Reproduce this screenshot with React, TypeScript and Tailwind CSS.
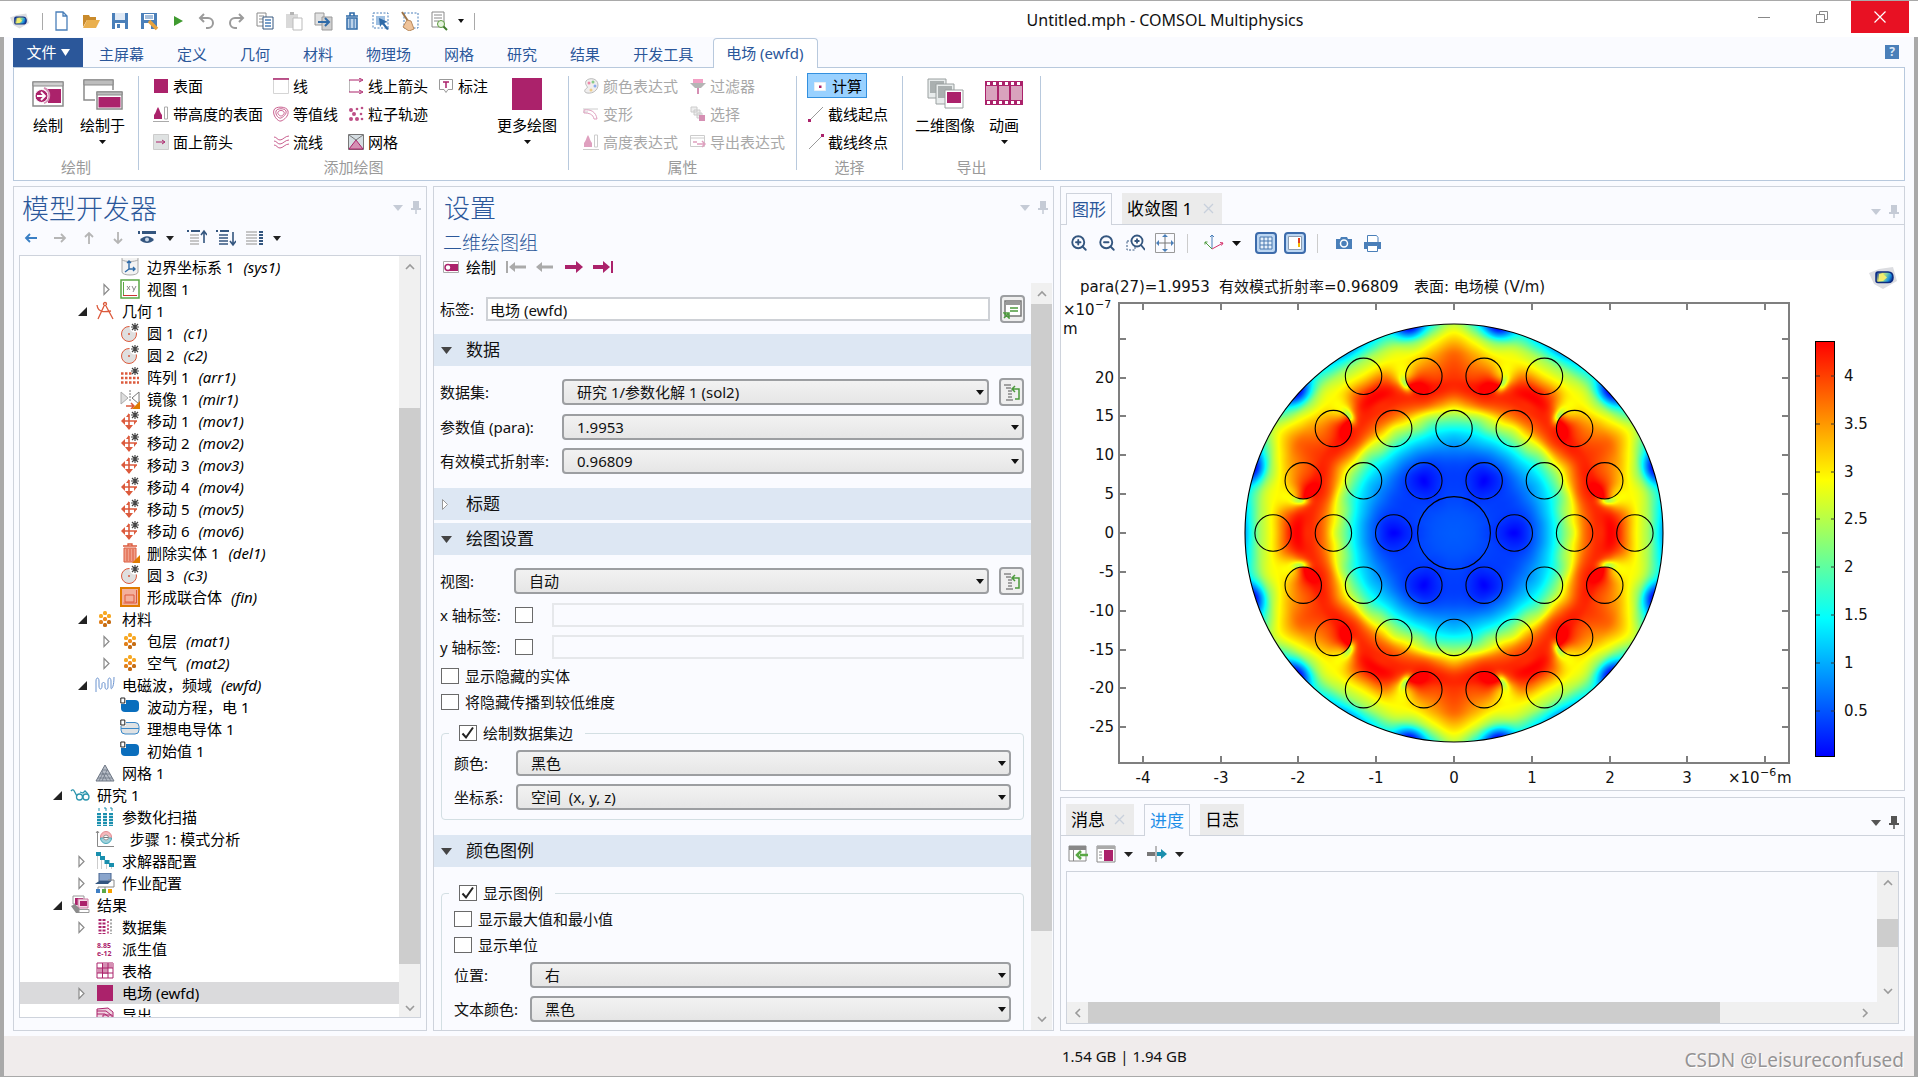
import React, { useEffect, useRef, useState } from 'react';
import { ZoomIn, ZoomOut } from 'lucide-react';

const MAGENTA = '#ab226b';
const BLUE = '#4a7fb9';
const NAVY = '#34567f';
const RED = '#dc5a3c';

/* ---------- small shared pieces ---------- */

type SvgProps = { w?: number; h?: number; box?: string; children: React.ReactNode };

function Svg({ w = 20, h = 20, box, children }: SvgProps) {
  return (
    <svg width={w} height={h} viewBox={box ?? `0 0 ${w} ${h}`} fill="none" className="shrink-0" aria-hidden="true">
      {children}
    </svg>
  );
}

function Caret({ color = '#111', w = 8 }: { color?: string; w?: number }) {
  const h = Math.round(w * 0.6);
  return (
    <Svg w={w} h={h}>
      <path d={`M0 0h${w}L${w / 2} ${h}z`} fill={color} />
    </Svg>
  );
}

function Pin({ color = '#c5cbd6' }: { color?: string }) {
  return (
    <Svg w={10} h={13}>
      <path d="M2 0h6v7h2v2H0V7h2z" fill={color} />
      <path d="M5 9v4" stroke={color} strokeWidth="1.5" />
    </Svg>
  );
}

function PaneControls({ dark = false }: { dark?: boolean }) {
  const color = dark ? '#555' : '#c5cbd6';
  return (
    <div className="flex items-center gap-2">
      <button aria-label="面板菜单"><Caret color={color} w={10} /></button>
      <button aria-label="固定面板"><Pin color={color} /></button>
    </div>
  );
}

function Chevron({ dir }: { dir: 'up' | 'down' | 'left' | 'right' }) {
  const d = {
    up: 'M1 7l4-4 4 4',
    down: 'M1 3l4 4 4-4',
    left: 'M7 1L3 5l4 4',
    right: 'M3 1l4 4-4 4',
  }[dir];
  return (
    <Svg w={10} h={10}>
      <path d={d} stroke="#9a9a9a" strokeWidth="1.6" />
    </Svg>
  );
}

function Logo({ w = 28, h = 22 }: { w?: number; h?: number }) {
  return (
    <svg width={w} height={h} viewBox="0 0 28 22" aria-hidden="true">
      <defs>
        <linearGradient id="logoFill" x1="0" x2="1" y1="0.3" y2="0.6">
          <stop offset="0" stopColor="#0b3fa8" />
          <stop offset="0.3" stopColor="#e9e96a" />
          <stop offset="0.55" stopColor="#7fd2a0" />
          <stop offset="0.8" stopColor="#1c8fe0" />
          <stop offset="1" stopColor="#0a2f8c" />
        </linearGradient>
      </defs>
      <path d="M0 6L10 2l14-2 4 14-7 4-7 4-9-5z" fill="#dcdde1" />
      <path d="M9 5h10c3 0 5 2 5 5.500s-2 5-5 5H9c-2 0-2-1-2-2V7c0-1 0-2 2-2z" fill="url(#logoFill)" stroke="#0b2a80" strokeWidth="1.500" />
      <path d="M10 7h4l4 3.500-4 3.500h-4z" fill="#f3ee6f" />
    </svg>
  );
}

/* ---------- title bar ---------- */

const quickActions = [
  { name: '新建', icon: <path d="M4 1h7l4 4v14H4zM11 1v4h4" stroke={BLUE} strokeWidth="1.3" /> },
  {
    name: '打开',
    icon: (
      <>
        <path d="M2 16V4h6l1 2h6v3H6z" fill="#c98a2b" />
        <path d="M2 17L6 9h13l-4 8z" fill="#eab04f" />
      </>
    ),
  },
  {
    name: '保存',
    icon: (
      <>
        <path d="M2 2h16v16H2z" fill={BLUE} />
        <path d="M5 2h10v7H5z" fill="#dfe9f5" />
        <path d="M5 12h10v6H5z" fill="#fff" />
        <path d="M7 13h3v4H7z" fill={BLUE} />
      </>
    ),
  },
  {
    name: '另存为',
    icon: (
      <>
        <path d="M2 2h16v16H2z" fill={BLUE} />
        <path d="M5 3h10v6H5zM5 12h7v6H5z" fill="#fff" />
        <path d="M6 5h8M6 7h8" stroke={BLUE} />
        <path d="M10 10l8 8" stroke="#e8a33d" strokeWidth="3.500" />
      </>
    ),
  },
  { name: '运行', icon: <path d="M6 5l9 5-9 5z" fill="#3f9a2f" /> },
  { name: '撤消', icon: <path d="M7 3L3 7l4 4M3 7h8a5 5 0 010 10H9" stroke="#9b9b9b" strokeWidth="2" /> },
  { name: '重做', icon: <path d="M13 3l4 4-4 4M17 7H9a5 5 0 000 10h2" stroke="#9b9b9b" strokeWidth="2" /> },
  {
    name: '复制',
    icon: (
      <>
        <path d="M2 2h9v13H2z" stroke="#8a8a8a" />
        <path d="M4 5h5M4 8h5M4 11h5" stroke="#8a8a8a" />
        <path d="M8 6h10v12H8z" fill="#fff" stroke={NAVY} />
        <path d="M10 9h6M10 12h6M10 15h6" stroke={BLUE} strokeWidth="1.5" />
      </>
    ),
  },
  {
    name: '粘贴',
    icon: (
      <>
        <path d="M2 3h12v14H2z" fill="#d9d9d9" />
        <path d="M6 1h4v3H6z" fill="#b5b5b5" />
        <path d="M9 7h9v12H9z" fill="#fff" stroke="#bbb" />
      </>
    ),
  },
  {
    name: '生成副本',
    icon: (
      <>
        <path d="M2 2h9v12H2z" fill="#e2e2e2" stroke="#999" />
        <path d="M9 6h10v13H9z" fill="#d0d0d0" stroke="#999" />
        <path d="M5 11h10M12 7l4 4-4 4" stroke="#2f6ba8" strokeWidth="2" />
      </>
    ),
  },
  {
    name: '删除',
    icon: (
      <>
        <path d="M4 5h12M8 5V2h4v3" stroke="#2f6ba8" strokeWidth="1.600" />
        <path d="M5 7h10v11H5z" fill="#bdd3ea" stroke="#2f6ba8" strokeWidth="1.500" />
        <path d="M8 8v9M12 8v9" stroke="#2f6ba8" />
      </>
    ),
  },
  {
    name: '选择',
    icon: (
      <>
        <path d="M2 2h15v15H2z" stroke={BLUE} strokeDasharray="2 1.500" />
        <path d="M5 5h9v9H5z" fill="#9fc0e2" />
        <path d="M8 7l9 4-4 1 5 6-2 1-5-6-2 3z" fill="#2f6ba8" />
      </>
    ),
  },
  {
    name: '清除',
    icon: (
      <>
        <path d="M4 2h14v15H4z" stroke={BLUE} strokeDasharray="2 1.500" />
        <path d="M2 1l6 9" stroke="#9c7448" strokeWidth="2" />
        <path d="M7 9l4 1 3 8-5 2-6-4z" fill="#efc39a" stroke="#b98a5d" />
      </>
    ),
  },
  {
    name: '查找',
    icon: (
      <>
        <path d="M3 1h12v15H3z" fill="#fff" stroke="#888" />
        <path d="M5 4h8M5 7h8M5 10h5" stroke="#888" />
        <circle cx="12" cy="13" r="3.500" fill="#e6f4df" stroke="#5b9a3c" />
        <path d="M14.500 15.500L18 19" stroke="#3f7d2c" strokeWidth="2" />
      </>
    ),
  },
];

function TitleBar() {
  return (
    <header className="flex h-[37px] shrink-0 items-start border-t border-[#a9a9a9] bg-white">
      <div className="flex h-9 items-center pl-[10px] pt-[4px]">
        <Logo w={19} h={16} />
        <span className="ml-[13px] h-[17px] w-px bg-[#a9a9a9]" />
        <div className="ml-[9px] flex gap-[9px]">
          {quickActions.map((action) => (
            <button key={action.name} aria-label={action.name}>
              <Svg>{action.icon}</Svg>
            </button>
          ))}
        </div>
        <button aria-label="自定义快速访问工具栏" className="ml-[9px]"><Caret w={6} /></button>
        <span className="ml-[10px] h-[17px] w-px bg-[#a9a9a9]" />
      </div>
      <h1 className="flex-1 pl-[120px] pt-[7px] text-center text-base leading-6 text-[#111]">Untitled.mph - COMSOL Multiphysics</h1>
      <div className="flex h-8 justify-end pr-[9px]">
        <button aria-label="最小化" className="flex w-[58px] items-center justify-center">
          <span className="h-px w-3 bg-[#888]" />
        </button>
        <button aria-label="还原" className="flex w-[58px] items-center justify-center">
          <Svg w={12} h={12}>
            <path d="M.5 3.500h8v8h-8zM3.500 3V.5h8v8H9" stroke="#888" />
          </Svg>
        </button>
        <button aria-label="关闭" className="flex w-[58px] items-center justify-center bg-[#e81123]">
          <Svg w={12} h={12}>
            <path d="M.5.5l11 11M11.500.5l-11 11" stroke="#fff" strokeWidth="1.200" />
          </Svg>
        </button>
      </div>
    </header>
  );
}

/* ---------- ribbon ---------- */

const menuTabs = ['主屏幕', '定义', '几何', '材料', '物理场', '网格', '研究', '结果', '开发工具'];

function MenuTabs() {
  return (
    <nav className="flex h-[30px] shrink-0 items-end">
      <button className="flex h-[29px] w-[70px] items-center justify-center gap-1 bg-[#2b579a] text-[15px] text-white">
        文件
        <Svg w={9} h={7}>
          <path d="M0 0h9L4.500 7z" fill="#fff" />
        </Svg>
      </button>
      <div className="flex h-[30px] items-center gap-px">
        {menuTabs.map((tab) => (
          <button key={tab} className="px-4 pt-1 text-[15px] text-[#2b579a]">{tab}</button>
        ))}
      </div>
      <button className="relative top-px ml-1 h-[30px] rounded-t border border-b-0 border-[#b8c9dd] bg-white pl-3 pr-[14px] text-[15px] text-[#2b579a]">
        电场 (ewfd)
      </button>
      <div className="flex flex-1 justify-end self-center pr-[6px]">
        <button aria-label="帮助" className="size-[14px] bg-[#4a7fb9] text-xs font-bold leading-[14px] text-[#dbe8f7]">?</button>
      </div>
    </nav>
  );
}

type RibbonItem = { label: string; icon: React.ReactNode; active?: boolean };

const plotColumns: RibbonItem[][] = [
  [
    { label: '表面', icon: <path d="M1 1h14v14H1z" fill={MAGENTA} /> },
    {
      label: '带高度的表面',
      icon: (
        <>
          <path d="M1 13V9c2-2 2-5 4-8 2 3 2 6 4 8v4z" fill={MAGENTA} />
          <path d="M0 15.500h16M11.500 1v12h3V1z" stroke="#aaa" />
        </>
      ),
    },
    {
      label: '面上箭头',
      icon: (
        <>
          <path d="M.5.5h15v15H.5z" fill="#dfe2e2" stroke="#ccc" />
          <path d="M3 8h8M9 6l3 2-3 2" stroke={MAGENTA} />
        </>
      ),
    },
  ],
  [
    {
      label: '线',
      icon: (
        <>
          <path d="M.5.5h15v15H.5z" stroke="#d5d5d5" />
          <path d="M0 1h16" stroke={MAGENTA} strokeWidth="1.500" />
        </>
      ),
    },
    {
      label: '等值线',
      icon: (
        <g stroke="#c9608f">
          <path d="M1 4c1-4 13-4 14 1s-4 9-7 10S-1 9 1 4z" />
          <path d="M3 5c1-3 9-3 10 0s-3 6-5 7-6-3-5-7z" />
          <path d="M5 6c1-2 5-2 6 0s-2 4-3 4-4-2-3-4z" />
        </g>
      ),
    },
    {
      label: '流线',
      icon: (
        <g stroke="#c9608f">
          <path d="M1 3c3 0 3 3 6 3s5-4 9-4" />
          <path d="M1 7c3 0 3 3 6 3s5-4 9-4" />
          <path d="M1 11c3 0 3 3 6 3s5-4 9-4" />
        </g>
      ),
    },
  ],
  [
    {
      label: '线上箭头',
      icon: (
        <>
          <path d="M1.500 2v12" stroke="#bbb" />
          <path d="M1 2h12M1 14h12M11 0l4 2-4 2M11 12l4 2-4 2" stroke={MAGENTA} />
        </>
      ),
    },
    {
      label: '粒子轨迹',
      icon: (
        <g fill="#bd4f86">
          <circle cx="3" cy="4" r="2" /><circle cx="9" cy="3" r="1.300" /><circle cx="14" cy="2" r="1.300" />
          <circle cx="6" cy="8" r="2" /><circle cx="3" cy="13" r="2" /><circle cx="9" cy="13" r="2" />
          <circle cx="13" cy="8" r="1.300" /><circle cx="14" cy="13" r="1.300" />
        </g>
      ),
    },
    {
      label: '网格',
      icon: (
        <>
          <path d="M.5.5h15v15H.5z" fill="#d5dde2" stroke="#777" />
          <path d="M1 15L8 6l7 9z" fill="#d58fb3" stroke={MAGENTA} />
          <path d="M1 1l7 5 7-5" stroke="#777" />
        </>
      ),
    },
  ],
];

const annotationItem: RibbonItem = {
  label: '标注',
  icon: (
    <>
      <path d="M1.500 1.500h13v10H10l-2 3-2-3H1.500z" stroke="#999" />
      <path d="M5 4h6M8 4v6" stroke={MAGENTA} strokeWidth="1.500" />
    </>
  ),
};

const attributeColumns: RibbonItem[][] = [
  [
    {
      label: '颜色表达式',
      icon: (
        <>
          <path d="M3 3c3-4 12-3 12 4 0 5-5 9-11 8-4-1-2-4 0-5s-3-3-1-7z" fill="#f0eeee" stroke="#bbb" />
          <circle cx="6" cy="5" r="1.500" fill="#e8a" /><circle cx="10" cy="4" r="1.500" fill="#8c8" />
          <circle cx="12" cy="8" r="1.500" fill="#8ae" /><circle cx="8" cy="12" r="1.500" fill="#ec8" />
        </>
      ),
    },
    {
      label: '变形',
      icon: (
        <>
          <path d="M0 3h15M0 6h5" stroke="#ccc" />
          <path d="M1 4c7-1 12 2 13 9l-3 0C10 8 6 7 1 7z" stroke="#dfa0bf" />
        </>
      ),
    },
    {
      label: '高度表达式',
      icon: (
        <>
          <path d="M1 13V9c2-2 2-5 4-8 2 3 2 6 4 8v4z" fill="#dfa0bf" />
          <path d="M0 15.500h16M11.500 1v12h3V1z" stroke="#ccc" />
        </>
      ),
    },
  ],
  [
    {
      label: '过滤器',
      icon: (
        <>
          <path d="M3 1h10v4H3z" fill="#f29fc4" />
          <path d="M0 5h16l-5 5H5z" fill="#b5b5b5" />
          <path d="M8 10v6" stroke="#d58fb3" strokeWidth="2" />
        </>
      ),
    },
    {
      label: '选择',
      icon: (
        <>
          <path d="M1 1h6v5H1zM4 4h6v5H4zM7 7h5v5H7z" fill="#eee" stroke="#ccc" />
          <path d="M9 9h6v6H9z" fill="#d58fb3" />
        </>
      ),
    },
    {
      label: '导出表达式',
      icon: (
        <>
          <path d="M.5 1.500h14v11H.5zM1 4h13" stroke="#ccc" />
          <path d="M3 8h4M7 10h8M12 7l3 3-3 3" stroke="#dfa0bf" strokeWidth="1.500" />
        </>
      ),
    },
  ],
];

const selectionItems: RibbonItem[] = [
  {
    label: '计算',
    active: true,
    icon: (
      <>
        <path d="M2.500 4.500h11v8h-11z" fill="#fff" stroke="#e8eef4" />
        <path d="M7 7.500h2.500V10H7z" fill={MAGENTA} />
      </>
    ),
  },
  {
    label: '截线起点',
    icon: (
      <>
        <path d="M2 14L15 1" stroke="#999" />
        <path d="M0 13h3v3H0z" fill={MAGENTA} />
      </>
    ),
  },
  {
    label: '截线终点',
    icon: (
      <>
        <path d="M1 15L14 2" stroke="#999" />
        <path d="M13 0h3v3h-3z" fill={MAGENTA} />
      </>
    ),
  },
];

function RibbonButton({ item, muted = false }: { item: RibbonItem; muted?: boolean }) {
  return (
    <button
      className={`flex h-[25px] items-center gap-1 whitespace-nowrap text-[15px] leading-5 ${muted ? 'text-[#a8a8a8]' : 'text-black'} ${
        item.active ? 'w-[60px] border border-[#3390df] bg-[#99d1ff] pl-1 pr-1' : 'border border-transparent'
      }`}
      disabled={muted}
    >
      <Svg w={16} h={16}>{item.icon}</Svg>
      {item.label}
    </button>
  );
}

function RibbonColumn({ items, muted }: { items: RibbonItem[]; muted?: boolean }) {
  return (
    <div className="flex flex-col items-start gap-[3px]">
      {items.map((item) => (
        <RibbonButton key={item.label} item={item} muted={muted} />
      ))}
    </div>
  );
}

function BigButton({ label, icon, caret = false }: { label: string; icon: React.ReactNode; caret?: boolean }) {
  return (
    <button className="flex h-[76px] flex-col items-center whitespace-nowrap pt-[5px] text-[15px] leading-5">
      {icon}
      <span className="mb-[5px] mt-[5px]">{label}</span>
      {caret && <Caret w={7} />}
    </button>
  );
}

function RibbonGroup({ title, width, children }: { title: string; width: string; children: React.ReactNode }) {
  return (
    <section className={`flex ${width}`}>
      <div className="flex h-[104px] flex-1 flex-col justify-between">
        <div className="flex">{children}</div>
        <h2 className="text-center text-[15px] leading-5 text-[#9a9a9a]">{title}</h2>
      </div>
      <span className="mt-[3px] h-[94px] w-px bg-[#b8c9dd]" />
    </section>
  );
}

const plotIcon = (
  <Svg w={32} h={32}>
    <path d="M1 4h30v24H1z" fill="#fff" stroke="#8b8b8b" strokeWidth="1.500" />
    <path d="M1 4h30v4H1z" fill="#cfcfcf" stroke="#8b8b8b" />
    <path d="M16 11h13v14H16z" fill={MAGENTA} />
    <path d="M12 10a8 8 0 010 15" stroke="#d58fb3" strokeWidth="2" />
    <circle cx="9.500" cy="18" r="6.500" fill={MAGENTA} stroke="#fff" />
    <path d="M5 18h7M9 14l4 4-4 4" stroke="#fff" strokeWidth="1.800" />
  </Svg>
);

const plotInIcon = (
  <Svg w={40} h={32}>
    <path d="M1 2h29v20H1z" fill="#fff" stroke="#8b8b8b" strokeWidth="1.500" />
    <path d="M1 2h29v5H1z" fill="#bdbdbd" stroke="#8b8b8b" />
    <path d="M12 12h28v20H12z" fill="#fff" />
    <path d="M14 14h25v17H14z" fill="#fff" stroke="#8b8b8b" strokeWidth="1.500" />
    <path d="M14 14h25v3H14z" fill="#bdbdbd" stroke="#8b8b8b" />
    <path d="M15.500 19h22v10.500h-22z" fill={MAGENTA} />
  </Svg>
);

const imageIcon = (
  <Svg w={37} h={32}>
    <path d="M1 1h18v19H1z" fill="#e8ecec" stroke="#9aa0a0" />
    <path d="M3 3h14v12H3z" fill="#aab0b0" />
    <path d="M9 6h18v20H9z" fill="#e8ecec" stroke="#9aa0a0" />
    <path d="M11 8h14v12H11z" fill="#aab0b0" />
    <path d="M18 12h18v18H18z" fill="#fff" stroke="#9aa0a0" />
    <path d="M20 14h14v11H20z" fill={MAGENTA} />
  </Svg>
);

const filmIcon = (
  <Svg w={38} h={32}>
    <path d="M0 3h38v24H0z" fill={MAGENTA} />
    <path d="M1 8h11v14H1zM14 8h10v14H14zM26 8h11v14H26z" fill="#d9a2bd" />
    <path d="M2 5.500h36M2 24.500h36" stroke="#fff" strokeWidth="3" strokeDasharray="3 3" />
  </Svg>
);

function Ribbon() {
  return (
    <div className="flex h-[114px] shrink-0 border border-[#b8c9dd] bg-white pt-[5px]">
      <RibbonGroup title="绘制" width="w-[125px]">
        <div className="flex gap-4 pl-[18px]">
          <BigButton label="绘制" icon={plotIcon} />
          <BigButton label="绘制于" icon={plotInIcon} caret />
        </div>
      </RibbonGroup>
      <RibbonGroup title="添加绘图" width="w-[430px]">
        <div className="flex pl-[13px]">
          <div className="flex gap-2">
            <RibbonColumn items={plotColumns[0]} />
            <RibbonColumn items={plotColumns[1]} />
            <RibbonColumn items={plotColumns[2]} />
            <RibbonColumn items={[annotationItem]} />
          </div>
          <div className="pl-2">
            <BigButton
              label="更多绘图"
              caret
              icon={
                <Svg w={32} h={32}>
                  <path d="M1 0h30v32H1z" fill={MAGENTA} />
                </Svg>
              }
            />
          </div>
        </div>
      </RibbonGroup>
      <RibbonGroup title="属性" width="w-[228px]">
        <div className="flex gap-[10px] pl-[13px]">
          <RibbonColumn items={attributeColumns[0]} muted />
          <RibbonColumn items={attributeColumns[1]} muted />
        </div>
      </RibbonGroup>
      <RibbonGroup title="选择" width="w-[106px]">
        <div className="pl-[10px]">
          <RibbonColumn items={selectionItems} />
        </div>
      </RibbonGroup>
      <RibbonGroup title="导出" width="w-[138px]">
        <div className="flex gap-[10px] pl-3">
          <BigButton label="二维图像" icon={imageIcon} />
          <BigButton label="动画" icon={filmIcon} caret />
        </div>
      </RibbonGroup>
    </div>
  );
}

/* ---------- model tree ---------- */

const star = (
  <g stroke="#444" strokeWidth="1.200">
    <path d="M15 0v8M11 4h8M12 1l6 6M18 1l-6 6" />
  </g>
);

const materialDots = (
  <g>
    <rect x="4" y="5" width="4" height="4" rx="1.500" fill="#f7a823" />
    <rect x="8" y="2" width="4" height="4" rx="1.500" fill="#f7a823" />
    <rect x="12" y="5" width="4" height="4" rx="1.500" fill="#f7a823" />
    <rect x="8" y="8" width="4" height="4" rx="1.500" fill="#f08a1c" />
    <rect x="4" y="11" width="4" height="4" rx="1.500" fill="#e07f1a" />
    <rect x="12" y="11" width="4" height="4" rx="1.500" fill="#c66d14" />
    <rect x="8" y="14" width="4" height="4" rx="1.500" fill="#c66d14" />
  </g>
);

const domainIcon = (
  <>
    <path d="M1 3h14a4 4 0 014 4v4a4 4 0 01-4 4H5a4 4 0 01-4-4z" fill="#0a6ebd" />
    <path d="M0 0h6v7H0z" fill="#fff" />
    <path d="M.8 1h4v5h-4z" stroke="#222" />
  </>
);

const treeIcons: Record<string, React.ReactNode> = {
  sys: (
    <>
      <path d="M2 1v14c0 4 16 4 16 0V1M2 3c4 2 12 2 16 0" stroke="#aaa" fill="#f3f3f3" />
      <path d="M9 12V4M7 6l2-2 2 2M9 12h6M13 10l2 2-2 2M9 12l-4 3" stroke="#2f6ba8" strokeWidth="1.400" />
    </>
  ),
  view: (
    <>
      <path d="M1 1h18v18H1z" fill="#fff" stroke="#5aa845" strokeWidth="1.500" />
      <path d="M3.500 3v13" stroke="#5aa845" />
      <path d="M3 16.500h14" stroke="#c33" />
      <path d="M7 7l3 4M10 7l-3 4M12 7l2 4M16 7l-3 6" stroke="#888" />
    </>
  ),
  geometry: (
    <g stroke={RED} strokeWidth="1.300">
      <circle cx="10" cy="3" r="1.500" />
      <path d="M9 5L3 18M11 5l7 13M2 4c1 8 8 7 14 6" />
    </g>
  ),
  circle: (
    <>
      <circle cx="9" cy="11" r="7.500" fill="#dfdfdf" stroke={RED} />
      <circle cx="15" cy="4" r="5.500" fill="#fff" />
      <circle cx="9" cy="11" r="1" fill={RED} />
      {star}
    </>
  ),
  array: (
    <>
      <path d="M1 6.500h11M1 11h18M1 15.500h18" stroke={RED} strokeWidth="2.500" strokeDasharray="2.500 1.500" />
      {star}
    </>
  ),
  mirror: (
    <>
      <path d="M1 3v12l7-6z" fill="#ddd" stroke="#aaa" />
      <path d="M19 3v12l-7-6z" stroke="#777" />
      <path d="M10 1v12" stroke="#777" strokeDasharray="2 1" />
      <path d="M6 17h8M11 14l3 3-3 3" stroke={RED} strokeWidth="1.500" />
      <path d="M20 12v8h-8z" fill="#e07b00" />
    </>
  ),
  move: (
    <>
      <path d="M9 3v15M3 10h14" stroke={RED} strokeWidth="1.600" />
      <path d="M6 6l3-4v4zM1 10l4-4v8zM5 14h8l-4 5zM17 10l-3 4v-4z" fill={RED} />
      <circle cx="15" cy="4" r="5" fill="#fff" />
      {star}
    </>
  ),
  trash: (
    <>
      <path d="M3 3h14M8 3V1h4v2" stroke={RED} strokeWidth="1.300" />
      <path d="M4 5h12v14H4z" fill="#f0a08c" stroke={RED} />
      <path d="M7 6v12M10 6v12M13 6v12" stroke={RED} />
      <path d="M20 12v8h-8z" fill="#e07b00" />
    </>
  ),
  union: (
    <>
      <path d="M1 1h18v18H1z" fill="#f3b09c" stroke="#e07b00" strokeWidth="2" />
      <path d="M5 8h9v7H5zM16.500 3v13h-13" stroke={RED} />
    </>
  ),
  material: materialDots,
  wave: <path d="M1 17V6c0-4 3-4 3 0v5c0 4 3 4 3 0V9c0-2 3-2 3 0v3c0 3 3 3 3 0V6c0-4 3-4 3 0v7c0 2 3 0 3-11" stroke="#6b93cf" />,
  domain: domainIcon,
  domainOutline: (
    <>
      <path d="M2 3.500h13a4 4 0 014 4V11a4 4 0 01-4 4H5a4 4 0 01-4-4V5z" fill="#dfe2e4" stroke="#3a88c8" />
      <path d="M1 9.500h18" stroke="#3a88c8" />
      <path d="M0 0h6v7H0z" fill="#fff" />
      <path d="M.8 1h4v5h-4z" stroke="#222" />
    </>
  ),
  mesh: (
    <>
      <path d="M10 2l9 16H1z" fill="#b8bec8" stroke="#6d7684" />
      <path d="M7 7h6M5 11h10M3 15h14M7 18l5-11M12 18L7 8M16 18l-5-8M4 18l4-8" stroke="#6d7684" strokeWidth=".8" />
    </>
  ),
  study: (
    <g stroke="#2b95ad" strokeWidth="1.300">
      <path d="M1 6c3-4 4 3 6 5" />
      <circle cx="9.500" cy="12" r="3" /><circle cx="16" cy="12" r="3" />
      <path d="M10 7l3 1 2-2 3 3" />
    </g>
  ),
  sweep: (
    <g stroke="#1a8fae">
      <path d="M4 1v3M9 1h2v3M15 1h2v3" />
      <path d="M4 6v13M10 6v13M16 6v13" strokeWidth="4" strokeDasharray="2.200 .8" />
    </g>
  ),
  mode: (
    <>
      <path d="M2.500 2v15.500H19M1 4l1.500-2L4 4" stroke="#888" />
      <circle cx="11" cy="8" r="5.500" fill="#f4b8bb" stroke="#e58a90" />
      <path d="M5.500 9a5.500 5.500 0 0011 0z" fill="#9fd3dd" stroke="#4aa9bb" />
      <circle cx="11" cy="8.500" r="2.500" fill="#fff" stroke="#999" />
      <path d="M8.500 8.500h5" stroke="#777" />
    </>
  ),
  solver: (
    <>
      <path d="M2.500 4v14M6.500 7v11M11.500 10v8M16.500 13v5" stroke="#ccc" />
      <path d="M1 1h5v4H1zM5 5h5v4H5zM9.500 9h5v4h-5zM14 12h5v4h-5z" fill="#1a8fae" />
    </>
  ),
  job: (
    <>
      <path d="M4 0h12v8H4z" fill="#8aa5cc" stroke="#46658f" />
      <path d="M0 11l4-3h12l-3 3z" fill="#34567f" />
      <path d="M13 7h6v7H3v3M10 14v3" stroke="#888" />
      <path d="M1 16h4v4H1z" fill="#3f7fc4" />
      <path d="M7 16h4v4H7z" fill="#5aa845" />
      <path d="M13 16h4v4h-4z" fill="#f5a000" />
    </>
  ),
  results: (
    <>
      <path d="M3 1h11v8H3z" fill="#fff" stroke="#999" />
      <path d="M5 3h8v7H5z" fill={MAGENTA} />
      <path d="M8 4h10v9H8z" fill="#f4d8e5" stroke="#c97aa2" />
      <path d="M10 6h7v5h-7z" fill={MAGENTA} />
      <path d="M1 11l5 7h13v-4h-9l-5-5z" fill="#8b8b8b" />
      <path d="M9 14.500h10v3H9z" fill="#fff" stroke="#999" />
    </>
  ),
  dataset: (
    <>
      <path d="M5 2v15M9 2v15" stroke={MAGENTA} strokeWidth="3" strokeDasharray="2 1.500" />
      <path d="M13 4v13" stroke="#c9608f" strokeWidth="2" strokeDasharray="2 1.500" />
      <path d="M16 2v15" stroke="#aaa" strokeWidth="2" strokeDasharray="2 1.500" />
    </>
  ),
  derived: (
    <g fill={MAGENTA} fontSize="7" fontWeight="700" fontFamily="Noto Sans, sans-serif">
      <text x="2" y="9">8.85</text>
      <text x="2" y="17">e-12</text>
    </g>
  ),
  table: (
    <>
      <path d="M2 2h16v15H2z" fill="#fff" stroke={MAGENTA} />
      <path d="M8 2h5v11H8zM2 7h6v5H2zM13 2h5v5h-5z" fill="#d58fb3" />
      <path d="M2 7h16M2 12h16M7.500 2v15M13 2v15" stroke={MAGENTA} />
    </>
  ),
  plot: <path d="M2 2h16v16H2z" fill={MAGENTA} />,
  export: (
    <>
      <path d="M2 4l11-1 5 4v12H6L2 14z" fill="#f0d3e1" stroke={MAGENTA} />
      <path d="M2 6l9 0 5 4M2 9l8 0 5 4M8 10h9v9H8z" stroke={MAGENTA} />
    </>
  ),
};

type TreeNode = { label: string; tag?: string; icon: string; level: 0 | 1 | 2; state?: 'open' | 'closed'; selected?: boolean };

const treeNodes: TreeNode[] = [
  { label: '边界坐标系 1', tag: 'sys1', icon: 'sys', level: 2 },
  { label: '视图 1', icon: 'view', level: 2, state: 'closed' },
  { label: '几何 1', icon: 'geometry', level: 1, state: 'open' },
  { label: '圆 1', tag: 'c1', icon: 'circle', level: 2 },
  { label: '圆 2', tag: 'c2', icon: 'circle', level: 2 },
  { label: '阵列 1', tag: 'arr1', icon: 'array', level: 2 },
  { label: '镜像 1', tag: 'mir1', icon: 'mirror', level: 2 },
  { label: '移动 1', tag: 'mov1', icon: 'move', level: 2 },
  { label: '移动 2', tag: 'mov2', icon: 'move', level: 2 },
  { label: '移动 3', tag: 'mov3', icon: 'move', level: 2 },
  { label: '移动 4', tag: 'mov4', icon: 'move', level: 2 },
  { label: '移动 5', tag: 'mov5', icon: 'move', level: 2 },
  { label: '移动 6', tag: 'mov6', icon: 'move', level: 2 },
  { label: '删除实体 1', tag: 'del1', icon: 'trash', level: 2 },
  { label: '圆 3', tag: 'c3', icon: 'circle', level: 2 },
  { label: '形成联合体', tag: 'fin', icon: 'union', level: 2 },
  { label: '材料', icon: 'material', level: 1, state: 'open' },
  { label: '包层', tag: 'mat1', icon: 'material', level: 2, state: 'closed' },
  { label: '空气', tag: 'mat2', icon: 'material', level: 2, state: 'closed' },
  { label: '电磁波，频域', tag: 'ewfd', icon: 'wave', level: 1, state: 'open' },
  { label: '波动方程，电 1', icon: 'domain', level: 2 },
  { label: '理想电导体 1', icon: 'domainOutline', level: 2 },
  { label: '初始值 1', icon: 'domain', level: 2 },
  { label: '网格 1', icon: 'mesh', level: 1 },
  { label: '研究 1', icon: 'study', level: 0, state: 'open' },
  { label: '参数化扫描', icon: 'sweep', level: 1 },
  { label: '\u00a0\u00a0步骤 1: 模式分析', icon: 'mode', level: 1 },
  { label: '求解器配置', icon: 'solver', level: 1, state: 'closed' },
  { label: '作业配置', icon: 'job', level: 1, state: 'closed' },
  { label: '结果', icon: 'results', level: 0, state: 'open' },
  { label: '数据集', icon: 'dataset', level: 1, state: 'closed' },
  { label: '派生值', icon: 'derived', level: 1 },
  { label: '表格', icon: 'table', level: 1 },
  { label: '电场 (ewfd)', icon: 'plot', level: 1, state: 'closed', selected: true },
  { label: '导出', icon: 'export', level: 1 },
];

const indents = ['pl-[30px]', 'pl-[55px]', 'pl-[80px]'];

function TreeRow({ node }: { node: TreeNode }) {
  return (
    <li
      className={`flex h-[22px] items-center whitespace-nowrap text-[15px] leading-[22px] ${indents[node.level]} ${
        node.selected ? 'bg-[#dadadc]' : ''
      }`}
    >
      <span className="mr-[6px] flex w-[14px] justify-center">
        {node.state === 'open' && (
          <Svg w={9} h={9}>
            <path d="M9 0v9H0z" fill="#222" />
          </Svg>
        )}
        {node.state === 'closed' && (
          <Svg w={8} h={13}>
            <path d="M1 1.500l5 5-5 5z" fill="#fff" stroke="#8a8a8a" strokeWidth="1.200" />
          </Svg>
        )}
      </span>
      <Svg>{treeIcons[node.icon]}</Svg>
      <span className="ml-[7px]">{node.label}</span>
      {node.tag && <i className="ml-[9px]">({node.tag})</i>}
    </li>
  );
}

function ArrowIcon({ dir, color }: { dir: 'left' | 'right' | 'up' | 'down'; color: string }) {
  const d = {
    left: 'M14 8H3M7 4L3 8l4 4',
    right: 'M2 8h11M9 4l4 4-4 4',
    up: 'M8 14V3M4 7l4-4 4 4',
    down: 'M8 2v11M4 9l4 4 4-4',
  }[dir];
  return (
    <Svg w={16} h={16}>
      <path d={d} stroke={color} strokeWidth="1.800" />
    </Svg>
  );
}

function TreeToolbar() {
  return (
    <div className="flex h-7 items-center pb-[6px] pl-1">
      <div className="flex gap-[13px]">
        <button aria-label="上一个节点"><ArrowIcon dir="left" color="#3a7fc4" /></button>
        <button aria-label="下一个节点"><ArrowIcon dir="right" color="#b5b5b5" /></button>
        <button aria-label="上移"><ArrowIcon dir="up" color="#b5b5b5" /></button>
        <button aria-label="下移"><ArrowIcon dir="down" color="#b5b5b5" /></button>
      </div>
      <button aria-label="显示更多选项" className="ml-3 flex items-center gap-[10px]">
        <Svg w={18} h={18}>
          <path d="M0 3.500h2M4 3.500h14" stroke={NAVY} strokeWidth="3" />
          <path d="M2 11c4-5 10-5 14 0-4 4-10 4-14 0z" fill={NAVY} />
          <circle cx="9" cy="10.500" r="2" fill="#c9d7e8" />
        </Svg>
        <Caret color="#222" />
      </button>
      <button aria-label="折叠" className="ml-[13px]">
        <Svg>
          <path d="M0 3h2M4 3h9" stroke={NAVY} strokeWidth="2" />
          <path d="M3 7h9M3 10h9M3 13h9M3 16h9" stroke="#b5b5b5" strokeWidth="1.500" />
          <path d="M17 15V4M14 7l3-4 3 4" stroke={NAVY} strokeWidth="1.600" />
        </Svg>
      </button>
      <button aria-label="展开" className="ml-[9px]">
        <Svg>
          <path d="M0 3h2M4 3h9" stroke={NAVY} strokeWidth="2" />
          <path d="M3 7h9M3 10h9M3 13h9M3 16h9" stroke={NAVY} strokeWidth="1.500" />
          <path d="M17 4v12M14 13l3 4 3-4" stroke={NAVY} strokeWidth="1.600" />
        </Svg>
      </button>
      <button aria-label="模型树节点文本" className="ml-[9px] flex items-center gap-[10px]">
        <Svg w={18} h={18}>
          <path d="M1 3h11M1 6h11M1 9h11M1 12h11M1 15h11" stroke="#b5b5b5" strokeWidth="1.500" />
          <path d="M14 3h4M14 6h4M14 9h4M14 12h4M14 15h4" stroke={NAVY} strokeWidth="2" />
        </Svg>
        <Caret color="#222" />
      </button>
    </div>
  );
}

function ModelBuilder() {
  return (
    <aside className="flex w-[414px] shrink-0 flex-col border border-[#ced3dc] px-[5px] pb-3">
      <div className="flex items-start justify-between pt-1">
        <h2 className="pl-[3px] text-[27px] font-light leading-9 text-[#2b579a]">模型开发器</h2>
        <div className="pt-[10px]"><PaneControls /></div>
      </div>
      <TreeToolbar />
      <div className="flex min-h-0 flex-1 overflow-hidden border border-[#ced3dc] bg-white">
        <ul className="min-w-0 flex-1 overflow-hidden">
          {treeNodes.map((node) => (
            <TreeRow key={node.label} node={node} />
          ))}
        </ul>
        <div className="flex w-[21px] flex-col items-center bg-[#f0f0f0]">
          <div className="flex basis-[20%] items-start pt-[6px]"><Chevron dir="up" /></div>
          <div className="w-full basis-[73%] bg-[#cdcdcd]" />
          <div className="flex flex-1 items-end pb-1"><Chevron dir="down" /></div>
        </div>
      </div>
    </aside>
  );
}

/* ---------- settings ---------- */

function Check({ label, defaultChecked = false, hideLabel = false }: { label: string; defaultChecked?: boolean; hideLabel?: boolean }) {
  const [checked, setChecked] = useState(defaultChecked);
  return (
    <label className="flex h-4 items-center gap-[6px] whitespace-nowrap text-[15px] leading-4">
      <span className="grid">
        <input
          type="checkbox"
          aria-label={label}
          checked={checked}
          onChange={() => setChecked(!checked)}
          className="col-start-1 row-start-1 h-4 w-[18px] appearance-none border border-[#6a6a6a] bg-white"
        />
        {checked && (
          <svg viewBox="0 0 18 16" className="pointer-events-none col-start-1 row-start-1 h-4 w-[18px]" fill="none">
            <path d="M3.500 8.500l3.500 4 7-10" stroke="#222" strokeWidth="2" />
          </svg>
        )}
      </span>
      {!hideLabel && <span>{label}</span>}
    </label>
  );
}

function Dropdown({ id, value }: { id: string; value: string }) {
  return (
    <div className="relative min-w-0 flex-1">
      <select
        id={id}
        className="block h-[26px] w-full appearance-none rounded border-2 border-[#9c9ea1] bg-linear-to-b from-[#f2f2f2] to-[#e6e6e6] pb-px pl-[13px] pr-6 text-[15px] leading-5 text-[#111]"
      >
        <option>{value}</option>
      </select>
      <span className="pointer-events-none absolute right-[5px] top-[11px]"><Caret /></span>
    </div>
  );
}

function GotoButton({ label, children }: { label: string; children: React.ReactNode }) {
  return (
    <button aria-label={label} className="ml-[10px] flex h-7 w-[25px] items-center justify-center rounded border-2 border-[#9c9ea1] bg-[#efefef]">
      {children}
    </button>
  );
}

const gotoSource = (
  <Svg w={18} h={18}>
    <path d="M1 2h7M3 5h5M5 8h4M5 11h4M5 14h4M3 17h7" stroke="#888" strokeWidth="1.500" />
    <path d="M10 6h6v10h-4M12 3l-3 3 3 3" stroke="#4c9a3c" strokeWidth="1.500" />
  </Svg>
);

function SectionBar({ title, open = true, className = '' }: { title: string; open?: boolean; className?: string }) {
  return (
    <button className={`flex h-8 w-full items-center bg-[#dde7f3] pl-[6px] text-[17px] text-[#111] ${className}`}>
      <span className="flex w-[26px] pl-px">
        {open ? (
          <Caret color="#444" w={11} />
        ) : (
          <Svg w={8} h={13}>
            <path d="M1.500 1.500l5 5-5 5z" fill="#fff" stroke="#999" />
          </Svg>
        )}
      </span>
      {title}
    </button>
  );
}

type FieldProps = { id: string; label: string; labelWidth: string; value: string; button?: boolean };

function Field({ id, label, labelWidth, value, button = false }: FieldProps) {
  return (
    <div className={`flex items-center ${button ? 'h-7' : 'h-[26px]'}`}>
      <label htmlFor={id} className={`shrink-0 whitespace-nowrap ${labelWidth}`}>{label}</label>
      <Dropdown id={id} value={value} />
      {button && <GotoButton label="转到源">{gotoSource}</GotoButton>}
    </div>
  );
}

function AxisLabelRow({ id, label }: { id: string; label: string }) {
  return (
    <div className="flex h-6 items-center">
      <label htmlFor={id} className="w-[75px] shrink-0">{label}</label>
      <Check label={`启用${label}`} hideLabel />
      <input id={id} disabled className="ml-[19px] h-6 min-w-0 flex-1 border-2 border-[#e6e8eb] bg-transparent px-2" />
    </div>
  );
}

function SettingsToolbar() {
  return (
    <div className="flex h-[18px] items-center pl-[9px] text-[15px]">
      <button className="flex items-center gap-[7px]">
        <Svg w={16} h={16}>
          <path d="M.5 2.500h15v11H.5z" fill="#fff" stroke="#aaa" />
          <path d="M7 5h8v7H7z" fill={MAGENTA} />
          <circle cx="5" cy="8.500" r="3" stroke={MAGENTA} strokeWidth="1.500" fill="#fff" />
        </Svg>
        绘制
      </button>
      <button aria-label="第一个" className="ml-[10px]">
        <Svg w={20} h={16}>
          <path d="M1 2v12" stroke="#aaa" strokeWidth="2" />
          <path d="M20 8H6" stroke="#aaa" strokeWidth="3" />
          <path d="M3 8l6-5v10z" fill="#aaa" />
        </Svg>
      </button>
      <button aria-label="上一个" className="ml-[10px]">
        <Svg w={17} h={16}>
          <path d="M17 8H4" stroke="#aaa" strokeWidth="3" />
          <path d="M0 8l6-5v10z" fill="#aaa" />
        </Svg>
      </button>
      <button aria-label="下一个" className="ml-3">
        <Svg w={18} h={16}>
          <path d="M0 8h13" stroke={MAGENTA} strokeWidth="4" />
          <path d="M18 8l-7-6v12z" fill={MAGENTA} />
        </Svg>
      </button>
      <button aria-label="最后一个" className="ml-[10px]">
        <Svg w={20} h={16}>
          <path d="M0 8h13" stroke={MAGENTA} strokeWidth="4" />
          <path d="M17 8l-7-6v12z" fill={MAGENTA} />
          <path d="M19 2v12" stroke={MAGENTA} strokeWidth="2" />
        </Svg>
      </button>
    </div>
  );
}

function Settings() {
  return (
    <section className="flex w-[621px] shrink-0 flex-col border border-[#ced3dc]">
      <div className="flex items-start justify-between pb-[2px] pr-[5px] pt-[3px]">
        <h2 className="pl-[10px] text-[26px] font-light leading-9 text-[#2b579a]">设置</h2>
        <div className="pt-[11px]"><PaneControls /></div>
      </div>
      <h3 className="pl-[9px] text-[19px] font-light leading-[30px] text-[#2b579a]">二维绘图组</h3>
      <SettingsToolbar />
      <div className="mt-[7px] flex min-h-0 flex-1 overflow-hidden">
        <form className="min-w-0 flex-1 overflow-hidden pt-3 text-[15px] leading-5 text-[#111]">
          <div className="flex h-7 items-center pl-[6px] pr-[6px]">
            <label htmlFor="plot-label" className="w-[46px] shrink-0">标签:</label>
            <input id="plot-label" defaultValue="电场 (ewfd)" className="h-6 min-w-0 flex-1 border-2 border-[#ced1d6] bg-white px-[2px]" />
            <GotoButton label="显示名称">
              <Svg w={19} h={20}>
                <path d="M2 2h16v15H2z" fill="#fff" stroke="#777" strokeWidth="1.500" />
                <path d="M2 3h16v3H2z" fill="#999" />
                <path d="M7 9h8M7 12h8" stroke="#4c9a3c" strokeWidth="1.500" />
                <path d="M1 19l4-4M1 14h5v5z" stroke="#4c9a3c" strokeWidth="1.500" />
              </Svg>
            </GotoButton>
          </div>

          <SectionBar title="数据" className="mt-[11px]" />
          <div className="flex flex-col gap-2 pb-[14px] pl-[6px] pr-[7px] pt-3">
            <Field id="dataset" label="数据集:" labelWidth="w-[122px]" value="研究 1/参数化解 1 (sol2)" button />
            <Field id="para" label="参数值 (para):" labelWidth="w-[122px]" value="1.9953" />
            <Field id="neff" label="有效模式折射率:" labelWidth="w-[122px]" value="0.96809" />
          </div>

          <SectionBar title="标题" open={false} />
          <SectionBar title="绘图设置" className="mt-[3px]" />
          <div className="flex flex-col gap-2 pl-[6px] pr-[7px] pt-3">
            <Field id="view" label="视图:" labelWidth="w-[74px]" value="自动" button />
            <AxisLabelRow id="x-axis" label="x 轴标签:" />
            <AxisLabelRow id="y-axis" label="y 轴标签:" />
          </div>
          <div className="flex flex-col gap-[10px] pl-[7px] pt-[9px]">
            <Check label="显示隐藏的实体" />
            <Check label="将隐藏传播到较低维度" />
          </div>
          <fieldset className="mx-[7px] mt-[15px] flex flex-col gap-2 rounded border border-[#d3dfe3] px-3 pb-[9px] pt-[9px]">
            <legend className="-ml-[5px] pl-[10px] pr-3"><Check label="绘制数据集边" defaultChecked /></legend>
            <Field id="edge-color" label="颜色:" labelWidth="w-[62px]" value="黑色" />
            <Field id="frame" label="坐标系:" labelWidth="w-[62px]" value={'空间\u00a0 (x, y, z)'} />
          </fieldset>

          <SectionBar title="颜色图例" className="mt-[15px]" />
          <fieldset className="mx-[7px] mt-[18px] flex flex-col gap-2 rounded border border-[#d3dfe3] px-3 pb-4 pt-[10px]">
            <legend className="-ml-[5px] pl-[10px] pr-3"><Check label="显示图例" defaultChecked /></legend>
            <div className="flex flex-col gap-[10px] pb-px">
              <Check label="显示最大值和最小值" />
              <Check label="显示单位" />
            </div>
            <Field id="legend-position" label="位置:" labelWidth="w-[76px]" value="右" />
            <Field id="legend-color" label="文本颜色:" labelWidth="w-[76px]" value="黑色" />
          </fieldset>
        </form>
        <div className="mr-px flex w-[21px] flex-col items-center bg-[#f0f0f0]">
          <div className="flex h-[21px] items-center"><Chevron dir="up" /></div>
          <div className="w-full basis-[84%] bg-[#cdcdcd]" />
          <div className="flex flex-1 items-end pb-[6px]"><Chevron dir="down" /></div>
        </div>
      </div>
    </section>
  );
}

/* ---------- field plot ---------- */

const RADIUS = 209;
const PITCH = 60.3;

// Normalised |E| over one 30 degree wedge: radius, then values at 0, 6, 12, 18, 24 and 30 degrees.
const fieldSamples: number[][] = [
  [0, 0.12, 0.12, 0.12, 0.12, 0.12, 0.12],
  [20, 0.11, 0.11, 0.11, 0.11, 0.11, 0.11],
  [36, 0.08, 0.08, 0.085, 0.09, 0.09, 0.09],
  [48, 0.045, 0.05, 0.065, 0.075, 0.08, 0.08],
  [60, 0.0, 0.025, 0.05, 0.07, 0.08, 0.08],
  [70, 0.045, 0.05, 0.07, 0.09, 0.1, 0.1],
  [80, 0.12, 0.12, 0.13, 0.14, 0.15, 0.15],
  [90, 0.21, 0.21, 0.22, 0.22, 0.22, 0.21],
  [100, 0.33, 0.33, 0.33, 0.31, 0.3, 0.29],
  [110, 0.49, 0.5, 0.5, 0.44, 0.43, 0.43],
  [120, 0.64, 0.67, 0.64, 0.61, 0.61, 0.58],
  [130, 0.84, 0.84, 0.85, 0.86, 0.82, 0.77],
  [140, 0.93, 0.93, 0.94, 0.96, 0.94, 0.91],
  [148, 0.95, 0.96, 0.93, 0.96, 0.96, 0.95],
  [156, 1.0, 0.97, 0.82, 0.9, 0.91, 0.93],
  [164, 0.96, 0.91, 0.7, 0.84, 0.87, 0.91],
  [172, 0.83, 0.82, 0.67, 0.77, 0.83, 0.89],
  [180, 0.7, 0.71, 0.67, 0.7, 0.78, 0.86],
  [188, 0.61, 0.62, 0.64, 0.61, 0.7, 0.79],
  [195, 0.53, 0.55, 0.57, 0.49, 0.62, 0.72],
  [202, 0.38, 0.42, 0.45, 0.23, 0.5, 0.65],
  [209, 0.22, 0.29, 0.33, 0.01, 0.37, 0.58],
  [216, 0.1, 0.2, 0.25, 0, 0.3, 0.5],
];

function spline(a: number, b: number, c: number, d: number, t: number) {
  return b + 0.5 * t * (c - a + t * (2 * a - 5 * b + 4 * c - d + t * (3 * (b - c) + d - a)));
}

function sampleRow(row: number[], angle: number) {
  const i = Math.min(4, Math.floor(angle / 6));
  const at = (k: number) => row[1 + (k < 0 ? -k : k > 5 ? 10 - k : k)];
  return spline(at(i - 1), at(i), at(i + 1), at(i + 2), angle / 6 - i);
}

function fieldAt(x: number, y: number) {
  const r = Math.hypot(x, y);
  let angle = ((Math.atan2(y, x) * 180) / Math.PI + 360) % 60;
  if (angle > 30) angle = 60 - angle;
  let i = 0;
  while (i < fieldSamples.length - 2 && fieldSamples[i + 1][0] <= r) i++;
  const last = fieldSamples.length - 1;
  const rows = [Math.max(0, i - 1), i, i + 1, Math.min(last, i + 2)].map((k) => sampleRow(fieldSamples[k], angle));
  const t = (r - fieldSamples[i][0]) / (fieldSamples[i + 1][0] - fieldSamples[i][0]);
  let value = spline(rows[0], rows[1], rows[2], rows[3], t);

  // local dips and peaks beside the outer holes
  const rad = (angle * Math.PI) / 180;
  const px = r * Math.cos(rad);
  const py = r * Math.sin(rad);
  const hx = 2.5 * PITCH;
  const hy = (Math.sqrt(3) / 2) * PITCH;
  const inHole = Math.hypot(px - hx, py - hy) < 18.3;
  if (inHole) {
    value += 0.17 * Math.exp(-((px - hx + 5) ** 2) / 130 - (py - hy + 18) ** 2 / 200);
  } else {
    value -= 0.24 * Math.exp(-((px - hx - 2) ** 2) / 60 - (py - hy + 20) ** 2 / 20);
  }
  return value;
}

function rainbow(t: number) {
  const v = Math.min(1, Math.max(0, t)) * 3;
  const clamp = (n: number) => Math.round(255 * Math.min(1, Math.max(0, n)));
  return [clamp(v - 1), clamp(Math.min(v, 3 - v)), clamp(2 - v)];
}

const holes: [number, number][] = [];
for (let row = -3; row <= 3; row++) {
  const count = 7 - Math.abs(row);
  for (let k = 0; k < count; k++) {
    const col = k - (count - 1) / 2;
    if (row !== 0 || col !== 0) holes.push([col * PITCH, (row * PITCH * Math.sqrt(3)) / 2]);
  }
}

function FieldCanvas() {
  const ref = useRef<HTMLCanvasElement>(null);

  useEffect(() => {
    const ctx = ref.current?.getContext('2d');
    if (!ctx) return;
    const image = ctx.createImageData(420, 420);
    for (let y = 0; y < 420; y++) {
      for (let x = 0; x < 420; x++) {
        const dx = x - 209.5;
        const dy = y - 209.5;
        if (Math.hypot(dx, dy) > RADIUS) continue;
        const [r, g, b] = rainbow(fieldAt(dx, dy));
        image.data.set([r, g, b, 255], (y * 420 + x) * 4);
      }
    }
    ctx.putImageData(image, 0, 0);
  }, []);

  return <canvas ref={ref} width={420} height={420} />;
}

const xTicks = [-4, -3, -2, -1, 0, 1, 2, 3, 4];
const yTicks = [-25, -20, -15, -10, -5, 0, 5, 10, 15, 20, 25];
const legendTicks = [4, 3.5, 3, 2.5, 2, 1.5, 1, 0.5];

function Plot() {
  return (
    <svg viewBox="0 0 843 530" className="block w-full bg-white" role="img" aria-label="电场模" fontFamily="'DejaVu Sans', 'Noto Sans CJK SC', sans-serif" fontSize="15" fill="#111">
      <text x="19" y="32">para(27)=1.9953</text>
      <text x="158" y="32">有效模式折射率=0.96809</text>
      <text x="353" y="32">表面: 电场模 (V/m)</text>
      <g transform="translate(808 7)">
        <Logo />
      </g>
      <text x="2" y="55">×10</text>
      <text x="34" y="48" fontSize="11">−7</text>
      <text x="2" y="74">m</text>

      <g stroke="#7f7f7f" strokeWidth="2" fill="none">
        <path d="M58 43h670v460H58z" />
        {xTicks.map((tick) => (
          <path key={tick} d={`M${Math.round(393 + tick * 77.8)} 43v7m0 446v7`} />
        ))}
        {yTicks.map((tick) => (
          <path key={tick} d={`M58 ${Math.round(273 - tick * 7.77)}h7m656 0h7`} />
        ))}
      </g>
      {xTicks.slice(0, 8).map((tick) => (
        <text key={tick} x={Math.round(393 + tick * 77.8)} y="523" textAnchor="middle">{tick}</text>
      ))}
      {yTicks.slice(0, 10).map((tick) => (
        <text key={tick} x="53" y={Math.round(278 - tick * 7.77)} textAnchor="end">{tick}</text>
      ))}
      <text x="667" y="523">×10</text>
      <text x="699" y="516" fontSize="11">−6</text>
      <text x="716" y="523">m</text>

      <foreignObject x="183" y="63" width="420" height="420">
        <FieldCanvas />
      </foreignObject>
      <g stroke="#000" strokeWidth="1.100" fill="none" transform="translate(393 273)">
        <circle r={RADIUS} />
        <circle r="36.400" />
        {holes.map(([x, y]) => (
          <circle key={`${x},${y}`} cx={x} cy={y} r="18.200" />
        ))}
      </g>

      <defs>
        <linearGradient id="rainbow" x1="0" x2="0" y1="0" y2="1">
          <stop offset="0" stopColor="#f00" />
          <stop offset="0.333" stopColor="#ff0" />
          <stop offset="0.667" stopColor="#0ff" />
          <stop offset="1" stopColor="#00f" />
        </linearGradient>
      </defs>
      <rect x="754.500" y="81.500" width="19" height="415" fill="url(#rainbow)" stroke="#000" />
      {legendTicks.map((tick) => {
        const y = Math.round(116 + (4 - tick) * 95.6);
        return (
          <g key={tick}>
            <path d={`M755 ${y}h4m11 0h4`} stroke="#333" />
            <text x="783" y={y + 5}>{tick}</text>
          </g>
        );
      })}
    </svg>
  );
}

/* ---------- graphics and messages ---------- */

function GraphicsToolbar() {
  const pressed = 'flex size-[22px] items-center justify-center rounded-sm border-2 border-[#3c6bab] bg-[#bcd6f2]';
  return (
    <div className="flex h-[35px] items-center pl-[9px] pt-px">
      <div className="flex items-center gap-[10px]">
        <button aria-label="放大"><ZoomIn size={18} color={NAVY} strokeWidth={2.5} /></button>
        <button aria-label="缩小"><ZoomOut size={18} color={NAVY} strokeWidth={2.5} /></button>
        <button aria-label="框选缩放">
          <Svg w={19} h={18}>
            <path d="M1 7h8v9H1z" stroke={NAVY} strokeDasharray="2 1.500" />
            <circle cx="11" cy="7" r="5.500" fill="#fff" stroke={NAVY} strokeWidth="1.800" />
            <path d="M8.500 7h5M11 4.500v5M15 11l4 5" stroke={NAVY} strokeWidth="1.800" />
          </Svg>
        </button>
        <button aria-label="缩放到窗口大小">
          <Svg>
            <path d="M.5.5h19v19H.5z" stroke="#999" />
            <path d="M10 2v16M2 10h16" stroke="#777" />
            <path d="M10 1l3 3H7zM10 19l3-3H7zM1 10l3-3v6zM19 10l-3-3v6z" fill={BLUE} />
          </Svg>
        </button>
      </div>
      <span className="ml-3 h-[19px] w-px bg-[#ccc]" />
      <button aria-label="转到默认视图" className="ml-4 flex items-center gap-2">
        <Svg w={20} h={18}>
          <path d="M8 14V1M6 3l2-2 2 2" stroke={BLUE} />
          <path d="M8 15L1 8M1 10.500V8h2.500" stroke="#4c9a3c" />
          <path d="M8 15l11-6M16 8.500l3 .5-1.500 2.500" stroke="#d6336c" />
        </Svg>
        <Caret color="#111" w={9} />
      </button>
      <div className="ml-[14px] flex gap-[7px]">
        <button aria-label="显示栅格" aria-pressed="true" className={pressed}>
          <Svg w={14} h={14}>
            <path d="M1 1h12v12H1zM1 5h12M1 9h12M5 1v12M9 1v12" fill="#e6f0fb" stroke="#4878b0" />
          </Svg>
        </button>
        <button aria-label="显示图例" aria-pressed="true" className={pressed}>
          <Svg w={14} h={14}>
            <path d="M.5.5h13v13H.5z" fill="#fff" stroke="#8a9bb0" />
            <path d="M10 2h2v5h-2z" fill="#e03c20" />
            <path d="M10 7h2v4h-2z" fill="#f5b800" />
          </Svg>
        </button>
      </div>
      <span className="ml-[11px] h-[19px] w-px bg-[#ccc]" />
      <button aria-label="图像快照" className="ml-[18px]">
        <Svg w={16} h={16}>
          <path d="M0 4h4l1-2h6l1 2h4v10H0z" fill={BLUE} />
          <circle cx="8" cy="8.500" r="3.500" stroke="#fff" strokeWidth="1.500" />
        </Svg>
      </button>
      <button aria-label="打印" className="ml-3">
        <Svg w={17} h={17}>
          <path d="M3.500 7V.5h9l1.500 2V7" fill="#fff" stroke={BLUE} />
          <path d="M0 7h17v7H0z" fill={BLUE} />
          <path d="M3.500 10.500h10v6h-10z" fill="#fff" stroke={BLUE} />
        </Svg>
      </button>
    </div>
  );
}

function CloseMark() {
  return (
    <Svg w={11} h={11}>
      <path d="M1 1l9 9M10 1l-9 9" stroke="#c8d0dc" strokeWidth="1.300" />
    </Svg>
  );
}

function Graphics() {
  return (
    <section className="shrink-0 border border-[#ced3dc]">
      <div className="flex h-[38px] items-end border-b border-[#ced3dc] pl-[5px]">
        <button className="relative top-px h-8 w-[46px] border border-b-0 border-[#ced3dc] bg-[#fafbff] text-[17px] text-[#2b579a]">图形</button>
        <button className="ml-[10px] flex h-[31px] w-[100px] items-center justify-between bg-[#ebebeb] pl-[5px] pr-2 text-[17px]">
          收敛图 1
          <CloseMark />
        </button>
        <div className="flex flex-1 justify-end pb-[6px] pr-[5px]"><PaneControls /></div>
      </div>
      <GraphicsToolbar />
      <Plot />
    </section>
  );
}

function Messages() {
  return (
    <section className="flex min-h-0 flex-1 flex-col border border-[#ced3dc]">
      <div className="flex h-[38px] shrink-0 items-end border-b border-[#ced3dc] pl-[5px] text-[17px]">
        <button className="flex h-[31px] w-[68px] items-center justify-between bg-[#ebebeb] pl-[5px] pr-[9px]">
          消息
          <CloseMark />
        </button>
        <button className="relative top-px ml-[10px] h-8 w-[46px] border border-b-0 border-[#ced3dc] bg-[#fafbff] text-[#1e8fe8]">进度</button>
        <button className="ml-[10px] h-[31px] w-11 bg-[#ebebeb]">日志</button>
        <div className="flex flex-1 justify-end pb-[6px] pr-[5px]"><PaneControls dark /></div>
      </div>
      <div className="flex h-[35px] shrink-0 items-center pl-[7px] pt-px">
        <button aria-label="清除消息">
          <Svg>
            <path d="M1 2h17v15H1z" fill="#fff" stroke="#888" />
            <path d="M1 2h17v4H1z" fill="#888" />
            <path d="M5.500 6v11" stroke="#888" />
            <path d="M20 11h-8M13 7l-4 4 4 4" stroke="#5aa845" strokeWidth="2.500" />
          </Svg>
        </button>
        <button aria-label="进度窗口" className="ml-2 flex items-center gap-2">
          <Svg>
            <path d="M1 2h18v16H1z" fill="#fff" stroke="#888" />
            <path d="M1 2h18v3H1z" fill="#aaa" />
            <path d="M3 8h3M3 11h3M3 14h3" stroke="#888" />
            <path d="M8 6h9v11H8z" fill={MAGENTA} />
          </Svg>
          <Caret color="#222" w={9} />
        </button>
        <button aria-label="滚动锁定" className="ml-[14px] flex items-center gap-2">
          <Svg>
            <path d="M0 10h8" stroke="#777" strokeWidth="4" />
            <path d="M9 2v16" stroke="#777" />
            <path d="M10 10h5" stroke="#1a8fae" strokeWidth="4" />
            <path d="M20 10l-6-5v10z" fill="#1a8fae" />
          </Svg>
          <Caret color="#222" w={9} />
        </button>
      </div>
      <div className="mx-[5px] mb-[6px] flex min-h-0 flex-1 flex-col border border-[#ced3dc]">
        <div className="flex min-h-0 flex-1">
          <div className="flex-1" />
          <div className="flex w-[21px] flex-col items-center bg-[#f0f0f0]">
            <div className="flex basis-[36%] items-start pt-[6px]"><Chevron dir="up" /></div>
            <div className="w-full basis-[22%] bg-[#cdcdcd]" />
            <div className="flex flex-1 items-end pb-[6px]"><Chevron dir="down" /></div>
          </div>
        </div>
        <div className="flex h-[21px] items-center bg-[#f0f0f0]">
          <div className="flex w-[21px] justify-center"><Chevron dir="left" /></div>
          <div className="h-full w-[76%] bg-[#cdcdcd]" />
          <div className="flex flex-1 justify-end pr-7"><Chevron dir="right" /></div>
        </div>
      </div>
    </section>
  );
}

function StatusBar() {
  return (
    <footer className="flex h-10 shrink-0 items-center justify-between bg-[#f0ecec] pr-[10px]">
      <p className="ml-[1058px] text-[15px] text-[#111]">1.54 GB | 1.94 GB</p>
      <p className="pt-2 text-[19px] text-[#959394] [text-shadow:1px_1px_0_#fff]">CSDN @Leisureconfused</p>
    </footer>
  );
}

export default function App() {
  return (
    <div className="flex h-screen flex-col overflow-hidden bg-white font-['Noto_Sans','Noto_Sans_CJK_SC',sans-serif] text-black">
      <TitleBar />
      <div className="flex min-h-0 flex-1 flex-col border-x-4 border-b border-[#a9a9a9]">
        <div className="flex min-h-0 flex-1 flex-col bg-[#fafbff] px-[9px]">
          <MenuTabs />
          <Ribbon />
          <main className="flex min-h-0 flex-1 gap-[6px] py-[5px]">
            <ModelBuilder />
            <Settings />
            <div className="flex min-w-0 flex-1 flex-col gap-[6px]">
              <Graphics />
              <Messages />
            </div>
          </main>
        </div>
        <StatusBar />
      </div>
    </div>
  );
}
